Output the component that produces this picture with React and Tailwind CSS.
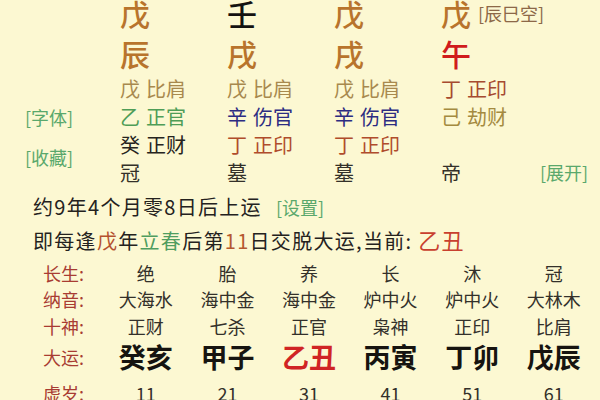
import React from 'react';

const pillars = [
  {
    stem: { ch: '戊', cls: 'text-[#b8742c]' },
    branch: { ch: '辰', cls: 'text-[#b8742c]' },
    hidden: [
      { gan: '戊', god: '比肩', cls: 'text-[#a8894e]' },
      { gan: '乙', god: '正官', cls: 'text-[#4f9d57]' },
      { gan: '癸', god: '正财', cls: 'text-[#262420]' },
    ],
    state: '冠',
  },
  {
    stem: { ch: '壬', cls: 'text-[#141210]' },
    branch: { ch: '戌', cls: 'text-[#b8742c]' },
    hidden: [
      { gan: '戊', god: '比肩', cls: 'text-[#a8894e]' },
      { gan: '辛', god: '伤官', cls: 'text-[#2c2c82]' },
      { gan: '丁', god: '正印', cls: 'text-[#b04c2c]' },
    ],
    state: '墓',
  },
  {
    stem: { ch: '戊', cls: 'text-[#b8742c]' },
    branch: { ch: '戌', cls: 'text-[#b8742c]' },
    hidden: [
      { gan: '戊', god: '比肩', cls: 'text-[#a8894e]' },
      { gan: '辛', god: '伤官', cls: 'text-[#2c2c82]' },
      { gan: '丁', god: '正印', cls: 'text-[#b04c2c]' },
    ],
    state: '墓',
  },
  {
    stem: { ch: '戊', cls: 'text-[#b8742c]' },
    branch: { ch: '午', cls: 'text-[#d01c1c]' },
    hidden: [
      { gan: '丁', god: '正印', cls: 'text-[#a64a30]' },
      { gan: '己', god: '劫财', cls: 'text-[#a48a40]' },
      null,
    ],
    state: '帝',
    empty: '[辰巳空]',
  },
];

const cols = ['w-[107px]', 'w-[107px]', 'w-[107px]', 'w-[99px]'];

const table = [
  { label: '长生:', h: 'h-[26px] leading-[26px]', cells: ['绝', '胎', '养', '长', '沐', '冠'] },
  { label: '纳音:', h: 'h-[26px] leading-[26px]', cells: ['大海水', '海中金', '海中金', '炉中火', '炉中火', '大林木'] },
  { label: '十神:', h: 'h-[28px] leading-[28px]', cells: ['正财', '七杀', '正官', '枭神', '正印', '比肩'] },
  { label: '大运:', h: 'h-[34px] leading-[34px]', cells: ['癸亥', '甲子', '乙丑', '丙寅', '丁卯', '戊辰'], big: true },
  { label: '虚岁:', h: 'h-[38px] leading-[38px]', cells: ['11', '21', '31', '41', '51', '61'] },
];

const Pillar = ({ p, w }) => (
  <div className={`${w} flex flex-col shrink-0`}>
    <div className="h-[26px] leading-[26px] text-[30px] font-medium whitespace-nowrap flex items-center">
      <span className={p.stem.cls}>{p.stem.ch}</span>
      {p.empty && (
        <span className="ml-[7px] text-[18px] font-normal text-[#8c6848]">{p.empty}</span>
      )}
    </div>
    <div className={`mt-[14px] h-[26px] leading-[26px] text-[30px] font-medium ${p.branch.cls}`}>
      {p.branch.ch}
    </div>
    <div className="mt-[9px]">
      {p.hidden.map((h, i) => (
        <div key={i} className="h-[28px] leading-[28px] text-[20px] flex gap-[6px]">
          {h && (
            <>
              <span className={h.cls}>{h.gan}</span>
              <span className={h.cls}>{h.god}</span>
            </>
          )}
        </div>
      ))}
      <div className="h-[28px] leading-[28px] text-[20px] text-[#333029]">{p.state}</div>
    </div>
  </div>
);

export default function App() {
  return (
    <div
      className="w-[600px] h-[400px] overflow-hidden bg-[#fcf8d2] text-[#24221e]"
      style={{ fontFamily: '"Noto Sans CJK SC", "Noto Sans", sans-serif' }}
    >
      {/* pillars */}
      <div className="flex">
        <div className="w-[120px] shrink-0 pl-[25px] pt-[103px] text-[18px] text-[#5aa86c]">
          <div className="h-[28px] leading-[28px]">[字体]</div>
          <div className="mt-[12px] h-[28px] leading-[28px]">[收藏]</div>
        </div>
        {pillars.map((p, i) => (
          <Pillar key={i} p={p} w={cols[i]} />
        ))}
        <div className="flex-1 pt-[158px] text-[18px] text-[#5aa86c]">
          <div className="h-[28px] leading-[28px]">[展开]</div>
        </div>
      </div>

      {/* luck start info */}
      <div className="mt-[4px] pl-[33px] text-[20px] tracking-[1.3px] whitespace-nowrap">
        <div className="h-[32px] leading-[32px]">
          约9年4个月零8日后上运
          <span className="ml-[14px] text-[18px] tracking-normal text-[#5aa86c]">[设置]</span>
        </div>
        <div className="h-[32px] leading-[32px]">
          即每逢<span className="text-[#b5512f]">戊</span>年<span className="text-[#4f9d5f]">立春</span>后第
          <span className="text-[#b5582f]">11</span>日交脱大运,当前:{' '}
          <span className="text-[22px] text-[#c8402e]">乙丑</span>
        </div>
      </div>

      {/* da yun table */}
      <div className="mt-[5px]">
        {table.map((row) => (
          <div key={row.label} className={`grid grid-cols-[105px_repeat(6,81.6px)] ${row.h}`}>
            <div className="pl-[43px] text-[18px] text-[#a83c32]">{row.label}</div>
            {row.cells.map((c, i) => (
              <div
                key={i}
                className={
                  row.big
                    ? `text-center text-[27px] font-bold ${c === '乙丑' ? 'text-[#d02424]' : 'text-[#161410]'}`
                    : 'text-center text-[18px] text-[#33302a]'
                }
              >
                {c}
              </div>
            ))}
          </div>
        ))}
      </div>
    </div>
  );
}
